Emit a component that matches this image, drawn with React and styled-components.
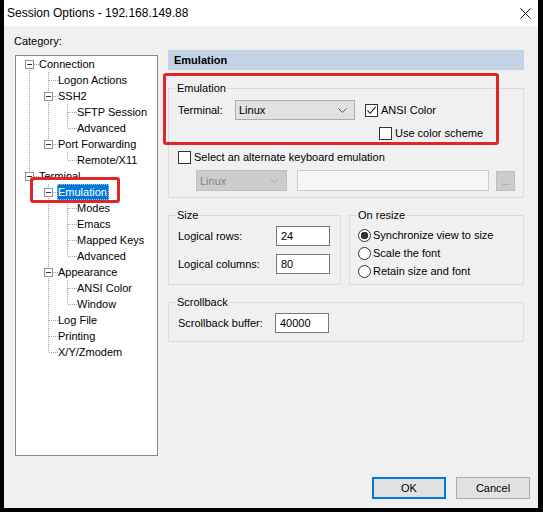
import React from "react";
import styled, { createGlobalStyle } from "styled-components";

const GlobalStyle = createGlobalStyle`
  html, body {
    margin: 0;
    background: #000;
  }
  body {
    font-family: "Segoe UI", "Liberation Sans", Arial, sans-serif;
    font-size: 11px;
    color: #000;
  }
`;

const tree = [
  {
    label: "Connection",
    children: [
      { label: "Logon Actions" },
      { label: "SSH2", children: [{ label: "SFTP Session" }, { label: "Advanced" }] },
      { label: "Port Forwarding", children: [{ label: "Remote/X11" }] },
    ],
  },
  {
    label: "Terminal",
    children: [
      {
        label: "Emulation",
        selected: true,
        children: [
          { label: "Modes" },
          { label: "Emacs" },
          { label: "Mapped Keys" },
          { label: "Advanced" },
        ],
      },
      { label: "Appearance", children: [{ label: "ANSI Color" }, { label: "Window" }] },
      { label: "Log File" },
      { label: "Printing" },
      { label: "X/Y/Zmodem" },
    ],
  },
];

function flatten(nodes, depth, guides, out) {
  nodes.forEach((n, i) => {
    const last = i === nodes.length - 1;
    out.push({
      label: n.label,
      selected: n.selected,
      depth,
      guides,
      last,
      first: depth === 0 && i === 0,
      hasKids: !!n.children,
    });
    if (n.children) flatten(n.children, depth + 1, [...guides, !last], out);
  });
  return out;
}

const rows = flatten(tree, 0, [], []);

function Guide({ through }) {
  return (
    <svg width="19" height="16" style={{ display: "block", flex: "none" }}>
      {through && (
        <line x1="9.5" y1="0" x2="9.5" y2="16" stroke="#a0a0a0" strokeDasharray="1 1" />
      )}
    </svg>
  );
}

function Connector({ first, last, hasKids }) {
  return (
    <svg width="19" height="16" style={{ display: "block", flex: "none" }}>
      {!first && (
        <line x1="9.5" y1="0" x2="9.5" y2="8" stroke="#a0a0a0" strokeDasharray="1 1" />
      )}
      {!last && (
        <line x1="9.5" y1="8" x2="9.5" y2="16" stroke="#a0a0a0" strokeDasharray="1 1" />
      )}
      <line x1="10" y1="8.5" x2="19" y2="8.5" stroke="#a0a0a0" strokeDasharray="1 1" />
      {hasKids && (
        <g>
          <rect x="5.5" y="4.5" width="8" height="8" fill="#fff" stroke="#919191" />
          <line x1="7" y1="8.5" x2="12" y2="8.5" stroke="#333" />
        </g>
      )}
    </svg>
  );
}

function Check({ checked, children }) {
  return (
    <CheckWrap>
      <CheckBox>
        {checked && (
          <svg width="11" height="11" viewBox="0 0 11 11">
            <path d="M1.5 5.5 L4.2 8.3 L9.6 1.8" fill="none" stroke="#222" strokeWidth="1.1" />
          </svg>
        )}
      </CheckBox>
      {children}
    </CheckWrap>
  );
}

function Radio({ checked, children }) {
  return (
    <RadioRow>
      <RadioDot $checked={checked} />
      {children}
    </RadioRow>
  );
}

function Combo({ value, width, disabled }) {
  return (
    <ComboBox $width={width} $disabled={disabled}>
      <span>{value}</span>
      <svg width="9" height="5" viewBox="0 0 9 5">
        <path d="M0.5 0.5 L4.5 4.5 L8.5 0.5" fill="none" stroke={disabled ? "#a8a8a8" : "#555"} />
      </svg>
    </ComboBox>
  );
}

const Window = styled.div`
  position: relative;
  width: 534px;
  height: 508px;
  margin-left: 4px;
  background: #f0f0f0;
  display: flex;
  flex-direction: column;
`;

const TitleBar = styled.div`
  height: 26px;
  flex: none;
  background: #fff;
  display: flex;
  align-items: center;
  justify-content: space-between;
  padding: 0 7px 0 3px;
  font-size: 12px;
`;

const Body = styled.div`
  flex: 1;
  display: flex;
  flex-direction: column;
  padding: 7px 8px 10px 11px;
`;

const Main = styled.div`
  display: flex;
  align-items: flex-start;
  gap: 10px;
`;

const LeftCol = styled.div`
  width: 143px;
  flex: none;
`;

const CategoryLabel = styled.div`
  line-height: 16px;
  margin-left: -1px;
  margin-bottom: 6px;
`;

const TreeBox = styled.div`
  box-sizing: border-box;
  height: 401px;
  border: 1px solid #828790;
  background: #fff;
  padding-left: 4px;
`;

const TreeRow = styled.div`
  display: flex;
  align-items: center;
  height: 16px;
`;

const NodeLabel = styled.span`
  line-height: 16px;
  margin-left: -1px;
  padding: 0 2px 0 1px;
  white-space: nowrap;
  background: ${(p) => (p.$selected ? "#0078d7" : "transparent")};
  color: ${(p) => (p.$selected ? "#fff" : "#000")};
  outline: ${(p) => (p.$selected ? "1px dotted #9cc9f0" : "none")};
  outline-offset: -1px;
`;

const RightCol = styled.div`
  width: 356px;
  flex: none;
  margin-top: 17px;
`;

const PanelHeader = styled.div`
  height: 20px;
  line-height: 20px;
  padding-left: 6px;
  background: #c4d4e4;
  font-weight: bold;
`;

const Group = styled.fieldset`
  margin: ${(p) => p.$top || 0}px 0 0 0;
  min-width: 0;
  border: 1px solid #dcdcdc;
  padding: ${(p) => p.$padTop || 0}px 9px ${(p) => p.$padBottom || 0}px 9px;
  ${(p) => (p.$width ? `width: ${p.$width}px; flex: none; box-sizing: border-box;` : "")}
  ${(p) => (p.$grow ? "flex: 1;" : "")}
`;

const Legend = styled.legend`
  padding: 0 1px;
  margin-left: -2px;
  line-height: 14px;
`;

const SplitRow = styled.div`
  display: flex;
  align-items: stretch;
  gap: 8px;
  margin-top: 10px;
`;

const FormRow = styled.div`
  display: flex;
  align-items: center;
  height: ${(p) => p.$height}px;
  margin-top: ${(p) => p.$top || 0}px;
  padding-left: ${(p) => p.$indent || 0}px;
`;

const FieldLabel = styled.span`
  width: ${(p) => p.$width}px;
  flex: none;
`;

const Spacer = styled.span`
  width: ${(p) => p.$w}px;
  flex: none;
`;

const ComboBox = styled.div`
  box-sizing: border-box;
  width: ${(p) => p.$width}px;
  height: ${(p) => (p.$disabled ? 21 : 20)}px;
  flex: none;
  display: flex;
  align-items: center;
  justify-content: space-between;
  padding: 0 7px 0 3px;
  background: ${(p) => (p.$disabled ? "#cccccc" : "#e1e1e1")};
  border: 1px solid ${(p) => (p.$disabled ? "#bfbfbf" : "#adadad")};
  color: ${(p) => (p.$disabled ? "#838383" : "#000")};
`;

const TextBox = styled.div`
  box-sizing: border-box;
  width: 192px;
  height: 21px;
  flex: none;
  background: #f6f6f6;
  border: 1px solid #cccccc;
`;

const DotsButton = styled.div`
  box-sizing: border-box;
  width: 19px;
  height: 20px;
  flex: none;
  display: flex;
  align-items: flex-end;
  justify-content: center;
  padding-bottom: 3px;
  background: #cccccc;
  border: 1px solid #bfbfbf;
  color: #8a8a8a;
  font-size: 10px;
  line-height: 10px;
`;

const CheckWrap = styled.label`
  display: flex;
  align-items: center;
  white-space: nowrap;
`;

const CheckBox = styled.span`
  box-sizing: border-box;
  width: 13px;
  height: 13px;
  flex: none;
  margin-right: 3px;
  border: 1px solid #333;
  background: #fff;
  display: flex;
  align-items: center;
  justify-content: center;
`;

const RadioRow = styled.div`
  display: flex;
  align-items: center;
  height: 18px;
  margin-left: -1px;
  white-space: nowrap;
`;

const RadioDot = styled.span`
  box-sizing: border-box;
  width: 13px;
  height: 13px;
  flex: none;
  margin-right: 2px;
  border-radius: 50%;
  border: 1px solid #333;
  background: ${(p) =>
    p.$checked ? "radial-gradient(circle, #333 0 3.5px, #fff 4px)" : "#fff"};
`;

const NumberInput = styled.input.attrs({ readOnly: true })`
  box-sizing: border-box;
  width: 54px;
  height: 20px;
  flex: none;
  margin: 0;
  padding: 0 4px;
  border: 1px solid #7a7a7a;
  background: #fff;
  font: inherit;
  color: #000;
  outline: none;
`;

const Footer = styled.div`
  display: flex;
  justify-content: flex-end;
  gap: 10px;
  margin-top: 21px;
`;

const DialogButton = styled.button`
  box-sizing: border-box;
  width: 74px;
  height: 22px;
  margin: 0;
  padding: 0;
  font: inherit;
  font-size: 11px;
  color: #000;
  background: #e1e1e1;
  border: 1px solid ${(p) => (p.$default ? "#0078d7" : "#adadad")};
  box-shadow: ${(p) => (p.$default ? "inset 0 0 0 1px #0078d7" : "none")};
`;

const Annotation = styled.div`
  position: absolute;
  box-sizing: border-box;
  border: 3px solid #e0262b;
  border-radius: 3px;
  pointer-events: none;
`;

export default function App() {
  return (
    <>
      <GlobalStyle />
      <Window>
        <TitleBar>
          <span>Session Options - 192.168.149.88</span>
          <svg width="11" height="11" viewBox="0 0 11 11">
            <path d="M0.5 0.5 L10.5 10.5 M10.5 0.5 L0.5 10.5" stroke="#111" strokeWidth="1" />
          </svg>
        </TitleBar>

        <Body>
          <Main>
            <LeftCol>
              <CategoryLabel>Category:</CategoryLabel>
              <TreeBox>
                {rows.map((r, i) => (
                  <TreeRow key={i}>
                    {r.guides.map((g, k) => (
                      <Guide key={k} through={g} />
                    ))}
                    <Connector first={r.first} last={r.last} hasKids={r.hasKids} />
                    <NodeLabel $selected={r.selected}>{r.label}</NodeLabel>
                  </TreeRow>
                ))}
              </TreeBox>
            </LeftCol>

            <RightCol>
              <PanelHeader>Emulation</PanelHeader>

              <Group $top={11} $padTop={5} $padBottom={6}>
                <Legend>Emulation</Legend>
                <FormRow $height={20}>
                  <FieldLabel $width={57}>Terminal:</FieldLabel>
                  <Combo value="Linux" width={120} />
                  <Spacer $w={10} />
                  <Check checked>ANSI Color</Check>
                </FormRow>
                <FormRow $height={14} $top={6} $indent={201}>
                  <Check>Use color scheme</Check>
                </FormRow>
                <FormRow $height={14} $top={10}>
                  <Check>Select an alternate keyboard emulation</Check>
                </FormRow>
                <FormRow $height={21} $top={6} $indent={18}>
                  <Combo value="Linux" width={91} disabled />
                  <Spacer $w={10} />
                  <TextBox />
                  <Spacer $w={7} />
                  <DotsButton>...</DotsButton>
                </FormRow>
              </Group>

              <SplitRow>
                <Group $width={173} $padTop={4} $padBottom={10}>
                  <Legend>Size</Legend>
                  <FormRow $height={20}>
                    <FieldLabel $width={98}>Logical rows:</FieldLabel>
                    <NumberInput defaultValue="24" />
                  </FormRow>
                  <FormRow $height={20} $top={8}>
                    <FieldLabel $width={98}>Logical columns:</FieldLabel>
                    <NumberInput defaultValue="80" />
                  </FormRow>
                </Group>
                <Group $grow $padTop={4} $padBottom={4}>
                  <Legend>On resize</Legend>
                  <Radio checked>Synchronize view to size</Radio>
                  <Radio>Scale the font</Radio>
                  <Radio>Retain size and font</Radio>
                </Group>
              </SplitRow>

              <Group $top={10} $padTop={4} $padBottom={8}>
                <Legend>Scrollback</Legend>
                <FormRow $height={20}>
                  <FieldLabel $width={97}>Scrollback buffer:</FieldLabel>
                  <NumberInput defaultValue="40000" />
                </FormRow>
              </Group>
            </RightCol>
          </Main>

          <Footer>
            <DialogButton $default>OK</DialogButton>
            <DialogButton>Cancel</DialogButton>
          </Footer>
        </Body>

        <Annotation style={{ left: 159, top: 73, width: 336, height: 72 }} />
        <Annotation style={{ left: 26, top: 177, width: 90, height: 26 }} />
      </Window>
    </>
  );
}
